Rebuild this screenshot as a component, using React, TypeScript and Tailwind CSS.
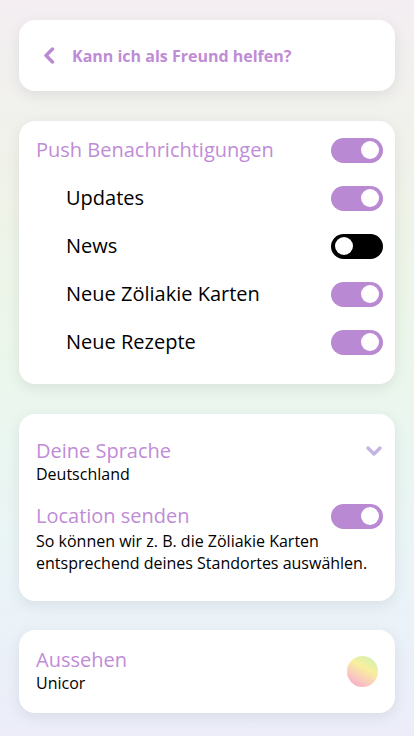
import React from "react";

function Toggle({ on }: { on: boolean }) {
  return on ? (
    <div className="w-[52px] h-[25px] rounded-full bg-[#b98ad3] flex items-center justify-end pr-[4px] shrink-0">
      <div className="w-[18px] h-[18px] rounded-full bg-white" />
    </div>
  ) : (
    <div className="w-[52px] h-[25px] rounded-full bg-black flex items-center justify-start pl-[4px] shrink-0">
      <div className="w-[18px] h-[18px] rounded-full bg-white" />
    </div>
  );
}

const card =
  "bg-white rounded-[16px] shadow-[0_4px_14px_rgba(60,60,80,0.10)]";

export default function App() {
  const subs: [string, boolean][] = [
    ["Updates", true],
    ["News", false],
    ["Neue Zöliakie Karten", true],
    ["Neue Rezepte", true],
  ];
  return (
    <div
      className="min-h-[736px] w-full px-[19px] pt-[20px] pb-[23px] flex flex-col bg-[linear-gradient(180deg,#f4eef2_0%,#f1f1ed_14%,#eff3e8_28%,#ecf6ea_45%,#eaf6f1_62%,#eaf4f7_78%,#ebf0f8_90%,#ecedf8_100%)]"
      style={{ fontFamily: '"Open Sans", "Noto Sans", sans-serif' }}
    >
      {/* Card 1 */}
      <div className={`${card} h-[71px] flex items-center pl-[24px]`}>
        <svg width="12" height="17" viewBox="0 0 12 17" className="shrink-0">
          <path
            d="M9.5 2 L3 8.5 L9.5 15"
            fill="none"
            stroke="#b98ad3"
            strokeWidth="3.4"
            strokeLinecap="round"
            strokeLinejoin="round"
          />
        </svg>
        <span className="ml-[17px] text-[16px] font-bold text-[#bf8cd6] leading-[22px]">
          Kann ich als Freund helfen?
        </span>
      </div>

      {/* Card 2 */}
      <div className={`${card} mt-[30px] pl-[17px] pr-[12px] pt-[5px] pb-[18px]`}>
        <div className="h-[48px] flex items-center justify-between">
          <span className="text-[20px] text-[#bf8cd6] leading-[26px]">
            Push Benachrichtigungen
          </span>
          <Toggle on={true} />
        </div>
        {subs.map(([label, on]) => (
          <div key={label} className="h-[48px] flex items-center justify-between">
            <span className="pl-[30px] text-[20px] text-black leading-[26px]">
              {label}
            </span>
            <Toggle on={on} />
          </div>
        ))}
      </div>

      {/* Card 3 */}
      <div className={`${card} mt-[30px] pl-[17px] pr-[12px] pt-[25px] pb-[27px]`}>
        <div className="flex items-start justify-between">
          <div className="flex flex-col">
            <span className="text-[20px] text-[#bf8cd6] leading-[24px]">
              Deine Sprache
            </span>
            <span className="text-[16px] text-black leading-[22px]">
              Deutschland
            </span>
          </div>
          <svg width="18" height="14" viewBox="0 0 18 14" className="mt-[5px] mr-[0px]">
            <path
              d="M3 4 L9 10 L15 4"
              fill="none"
              stroke="#c4b4e4"
              strokeWidth="3.4"
              strokeLinecap="round"
              strokeLinejoin="round"
            />
          </svg>
        </div>
        <div className="mt-[18px] flex items-center justify-between">
          <span className="text-[20px] text-[#bf8cd6] leading-[26px]">
            Location senden
          </span>
          <Toggle on={true} />
        </div>
        <p className="mt-[1px] text-[16px] text-black leading-[22px]">
          So können wir z. B. die Zöliakie Karten
          <br />
          entsprechend deines Standortes auswählen.
        </p>
      </div>

      {/* Card 4 */}
      <div className={`${card} mt-[29px] pl-[17px] pr-[17px] pt-[18px] pb-[19px] flex items-center justify-between`}>
        <div className="flex flex-col">
          <span className="text-[20px] text-[#bf8cd6] leading-[24px]">Aussehen</span>
          <span className="text-[16px] text-black leading-[22px]">Unicor</span>
        </div>
        <div className="w-[31px] h-[31px] rounded-full bg-[linear-gradient(30deg,#f6a3c6_0%,#f9c8c0_30%,#f8ef9e_60%,#c9f1b4_100%)] blur-[0.6px]" />
      </div>
    </div>
  );
}
